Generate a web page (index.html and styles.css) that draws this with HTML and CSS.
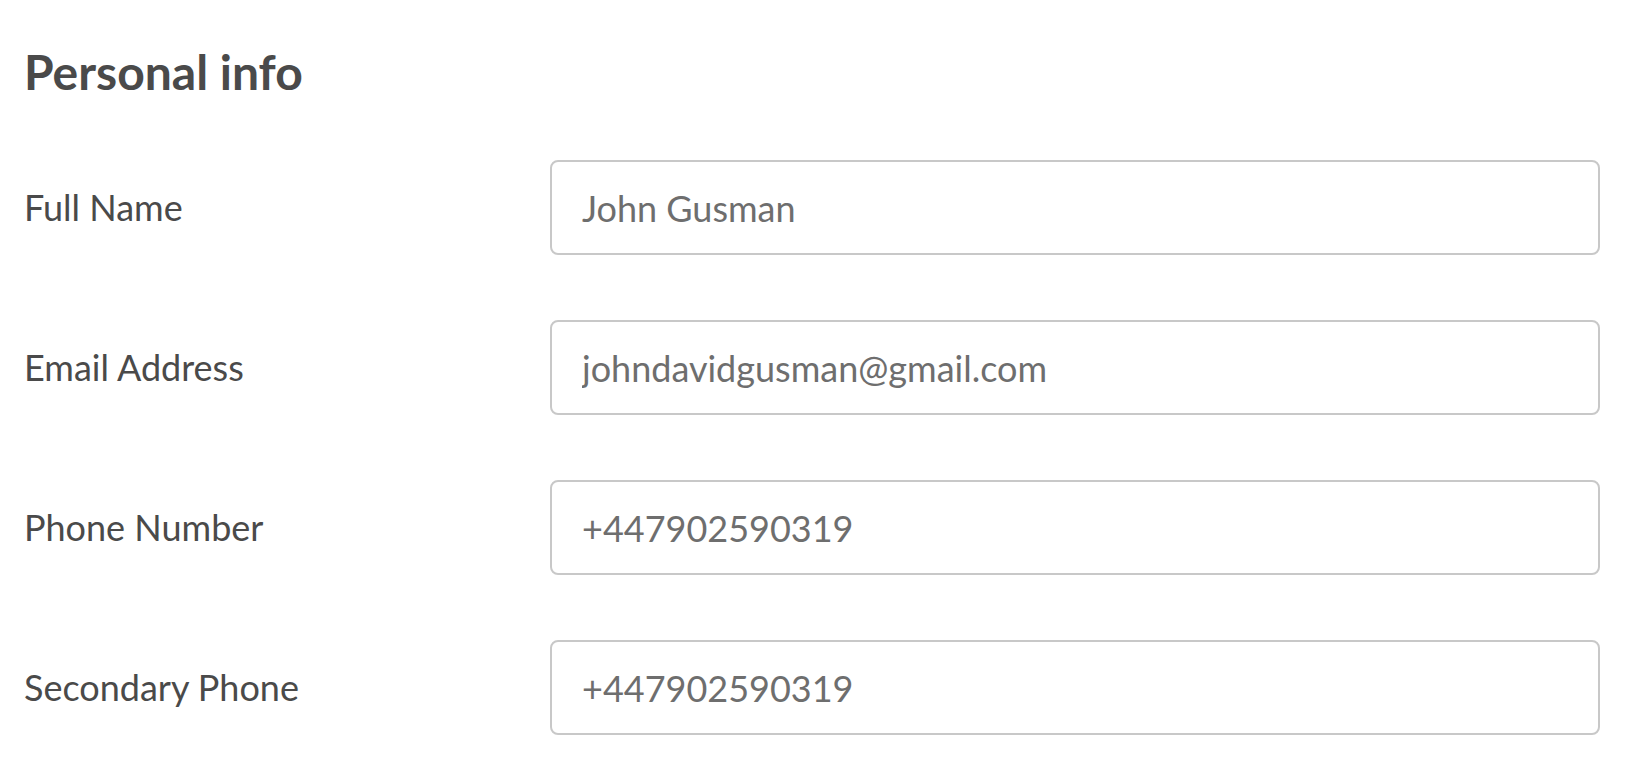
FILE: index.html
```html
<!DOCTYPE html>
<html lang="en">
<head>
<meta charset="utf-8">
<title>Personal info</title>
<link rel="stylesheet" href="styles.css">
</head>
<body>
<section class="panel">
  <h1 class="title">Personal info</h1>
  <form class="fields">
    <div class="row">
      <label class="label" for="f1">Full Name</label>
      <input class="input" id="f1" type="text" value="John Gusman">
    </div>
    <div class="row">
      <label class="label" for="f2">Email Address</label>
      <input class="input" id="f2" type="text" value="johndavidgusman@gmail.com">
    </div>
    <div class="row">
      <label class="label" for="f3">Phone Number</label>
      <input class="input" id="f3" type="text" value="+447902590319">
    </div>
    <div class="row">
      <label class="label" for="f4">Secondary Phone</label>
      <input class="input" id="f4" type="text" value="+447902590319">
    </div>
  </form>
</section>
</body>
</html>
```
FILE: styles.css
```css
html, body {
  margin: 0;
  padding: 0;
  background: #ffffff;
}
body {
  font-family: Lato, "Open Sans", sans-serif;
  color: #4a4a4a;
}
.panel {
  padding: 43px 32px 0 24px;
}
.title {
  margin: 0;
  font-size: 48px;
  font-weight: 700;
  line-height: 57px;
  color: #4a4a4a;
}
.fields {
  margin-top: 60px;
  display: flex;
  flex-direction: column;
  gap: 65px;
}
.row {
  display: grid;
  grid-template-columns: 526px 1fr;
  align-items: center;
  height: 95px;
}
.label {
  font-size: 36px;
  line-height: 43px;
  color: #4a4a4a;
}
.input {
  box-sizing: border-box;
  height: 95px;
  width: 100%;
  margin: 0;
  padding: 0 0 0 30px;
  border: 2px solid #c8c8c8;
  border-radius: 8px;
  font-family: Lato, "Open Sans", sans-serif;
  font-size: 36px;
  color: #6e6e6e;
  background: #ffffff;
  outline: none;
}
```
